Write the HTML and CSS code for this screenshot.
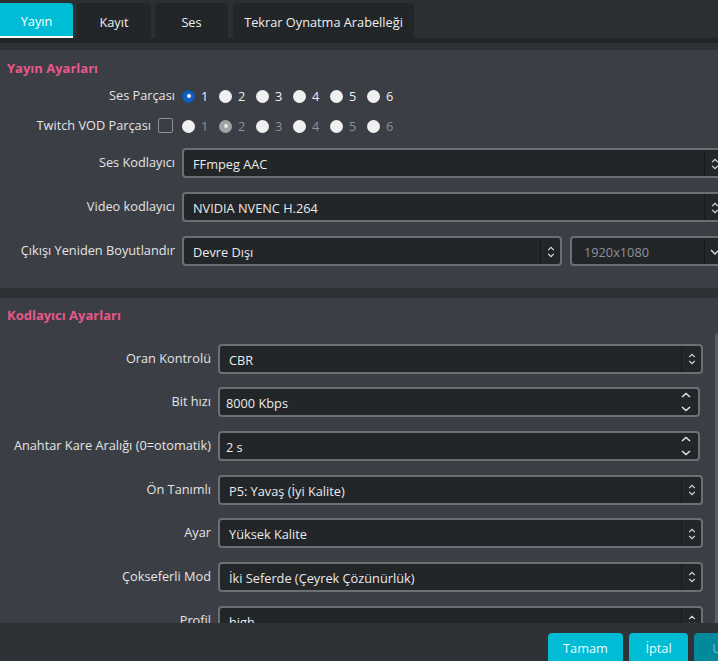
FILE: index.html
```html
<!DOCTYPE html>
<html lang="tr">
<head>
<meta charset="utf-8">
<title>Çıkış Ayarları</title>
<link rel="stylesheet" href="styles.css">
</head>
<body>
<div class="app">
  <div class="tabbar">
    <div class="tab active">Yayın</div>
    <div class="tab">Kayıt</div>
    <div class="tab">Ses</div>
    <div class="tab wide">Tekrar Oynatma Arabelleği</div>
  </div>
  <div class="tabedge"></div>
  <div class="scroll">
    <section class="group g1">
      <h2 class="gtitle">Yayın Ayarları</h2>
      <div class="row rradio first">
        <div class="label">Ses Parçası</div>
        <div class="radios">
          <span class="opt"><span class="radio on"></span>1</span>
          <span class="opt"><span class="radio"></span>2</span>
          <span class="opt"><span class="radio"></span>3</span>
          <span class="opt"><span class="radio"></span>4</span>
          <span class="opt"><span class="radio"></span>5</span>
          <span class="opt"><span class="radio"></span>6</span>
        </div>
      </div>
      <div class="row rradio second">
        <div class="label">Twitch VOD Parçası <span class="check"></span></div>
        <div class="radios disabled">
          <span class="opt"><span class="radio"></span>1</span>
          <span class="opt"><span class="radio dis-on"></span>2</span>
          <span class="opt"><span class="radio"></span>3</span>
          <span class="opt"><span class="radio"></span>4</span>
          <span class="opt"><span class="radio"></span>5</span>
          <span class="opt"><span class="radio"></span>6</span>
        </div>
      </div>
      <div class="row rfield f1">
        <div class="label">Ses Kodlayıcı</div>
        <div class="combo wfull">
          <span class="val">FFmpeg AAC</span>
          <span class="arrows"><svg width="8" height="12" viewBox="0 0 8 12"><path d="M1.2 4.2 L4 1.4 L6.8 4.2 M1.2 7.8 L4 10.6 L6.8 7.8" fill="none" stroke="#dcdcdc" stroke-width="1.2"/></svg></span>
        </div>
      </div>
      <div class="row rfield">
        <div class="label">Video kodlayıcı</div>
        <div class="combo wfull">
          <span class="val">NVIDIA NVENC H.264</span>
          <span class="arrows"><svg width="8" height="12" viewBox="0 0 8 12"><path d="M1.2 4.2 L4 1.4 L6.8 4.2 M1.2 7.8 L4 10.6 L6.8 7.8" fill="none" stroke="#dcdcdc" stroke-width="1.2"/></svg></span>
        </div>
      </div>
      <div class="row rfield">
        <div class="label">Çıkışı Yeniden Boyutlandır</div>
        <div class="pair">
          <div class="combo wres">
            <span class="val">Devre Dışı</span>
            <span class="arrows"><svg width="8" height="12" viewBox="0 0 8 12"><path d="M1.2 4.2 L4 1.4 L6.8 4.2 M1.2 7.8 L4 10.6 L6.8 7.8" fill="none" stroke="#dcdcdc" stroke-width="1.2"/></svg></span>
          </div>
          <div class="combo wsize">
            <span class="val muted">1920x1080</span>
            <span class="arrows"><svg width="10" height="8" viewBox="0 0 10 8"><path d="M1 2 L5 6 L9 2" fill="none" stroke="#dcdcdc" stroke-width="1.4"/></svg></span>
          </div>
        </div>
      </div>
    </section>

    <section class="group g2">
      <div class="form2">
        <h2 class="gtitle">Kodlayıcı Ayarları</h2>
        <div class="rows2">
          <div class="row rfield">
            <div class="label l2">Oran Kontrolü</div>
            <div class="combo w2">
              <span class="val">CBR</span>
              <span class="arrows"><svg width="8" height="12" viewBox="0 0 8 12"><path d="M1.2 4.2 L4 1.4 L6.8 4.2 M1.2 7.8 L4 10.6 L6.8 7.8" fill="none" stroke="#dcdcdc" stroke-width="1.2"/></svg></span>
            </div>
          </div>
          <div class="row rfield">
            <div class="label l2">Bit hızı</div>
            <div class="spin w2s">
              <span class="val">8000 Kbps</span>
              <span class="spinarrows"><svg width="10" height="20" viewBox="0 0 10 20"><path d="M1 5 L5 1.5 L9 5 M1 15 L5 18.5 L9 15" fill="none" stroke="#e6e6e6" stroke-width="1.5"/></svg></span>
            </div>
          </div>
          <div class="row rfield">
            <div class="label l2">Anahtar Kare Aralığı (0=otomatik)</div>
            <div class="spin w2s">
              <span class="val">2 s</span>
              <span class="spinarrows"><svg width="10" height="20" viewBox="0 0 10 20"><path d="M1 5 L5 1.5 L9 5 M1 15 L5 18.5 L9 15" fill="none" stroke="#e6e6e6" stroke-width="1.5"/></svg></span>
            </div>
          </div>
          <div class="row rfield">
            <div class="label l2">Ön Tanımlı</div>
            <div class="combo w2">
              <span class="val">P5: Yavaş (İyi Kalite)</span>
              <span class="arrows"><svg width="8" height="12" viewBox="0 0 8 12"><path d="M1.2 4.2 L4 1.4 L6.8 4.2 M1.2 7.8 L4 10.6 L6.8 7.8" fill="none" stroke="#dcdcdc" stroke-width="1.2"/></svg></span>
            </div>
          </div>
          <div class="row rfield">
            <div class="label l2">Ayar</div>
            <div class="combo w2">
              <span class="val">Yüksek Kalite</span>
              <span class="arrows"><svg width="8" height="12" viewBox="0 0 8 12"><path d="M1.2 4.2 L4 1.4 L6.8 4.2 M1.2 7.8 L4 10.6 L6.8 7.8" fill="none" stroke="#dcdcdc" stroke-width="1.2"/></svg></span>
            </div>
          </div>
          <div class="row rfield">
            <div class="label l2">Çokseferli Mod</div>
            <div class="combo w2">
              <span class="val">İki Seferde (Çeyrek Çözünürlük)</span>
              <span class="arrows"><svg width="8" height="12" viewBox="0 0 8 12"><path d="M1.2 4.2 L4 1.4 L6.8 4.2 M1.2 7.8 L4 10.6 L6.8 7.8" fill="none" stroke="#dcdcdc" stroke-width="1.2"/></svg></span>
            </div>
          </div>
          <div class="row rfield">
            <div class="label l2">Profil</div>
            <div class="combo w2">
              <span class="val">high</span>
              <span class="arrows"><svg width="8" height="12" viewBox="0 0 8 12"><path d="M1.2 4.2 L4 1.4 L6.8 4.2 M1.2 7.8 L4 10.6 L6.8 7.8" fill="none" stroke="#dcdcdc" stroke-width="1.2"/></svg></span>
            </div>
          </div>
        </div>
      </div>
      <div class="vscroll"></div>
    </section>
  </div>
  <div class="bottombar">
    <button class="btn b-ok">Tamam</button>
    <button class="btn b-cancel">İptal</button>
    <button class="btn b-apply">Uygula</button>
  </div>
</div>
</body>
</html>
```

FILE: styles.css
```css
html, body {
  margin: 0;
  padding: 0;
}
body {
  width: 718px;
  height: 661px;
  overflow: hidden;
  background: #2b2e32;
  font-family: "Open Sans", "DejaVu Sans", sans-serif;
  font-size: 12.75px;
  color: #e4e4e4;
}
.app {
  width: 718px;
  height: 661px;
  display: flex;
  flex-direction: column;
  overflow: hidden;
}
.tabbar {
  height: 38px;
  box-sizing: border-box;
  padding-top: 3px;
  display: flex;
  gap: 4px;
  background: #2b2e32;
  flex-shrink: 0;
}
.tab {
  width: 73px;
  height: 35px;
  box-sizing: border-box;
  background: #232629;
  border-radius: 4px 4px 0 0;
  display: flex;
  align-items: center;
  justify-content: center;
  padding-top: 2px;
  color: #eeeeee;
}
.tab:nth-child(2) { width: 74px; }
.tab.wide { width: 181px; margin-left: 1px; }
.tab.active {
  background: #00bcd4;
  border-bottom: 2px solid #ffffff;
  border-top-left-radius: 0;
  color: #ffffff;
}
.tabedge {
  height: 5px;
  background: #222427;
  flex-shrink: 0;
}
.scroll {
  flex: 1;
  overflow: hidden;
  background: #2e3135;
  padding-top: 7px;
  display: flex;
  flex-direction: column;
  gap: 10px;
}
.group {
  background: #3b3e45;
  flex-shrink: 0;
}
.g1 {
  height: 238px;
  box-sizing: border-box;
  padding-top: 9px;
  overflow: hidden;
}
.gtitle {
  margin: 0 0 0 7px;
  height: 18px;
  line-height: 18px;
  font-size: 13px;
  font-weight: 700;
  color: #e8578a;
}
.row {
  display: flex;
  align-items: center;
  gap: 7px;
}
.label {
  width: 175px;
  flex-shrink: 0;
  text-align: right;
  white-space: nowrap;
  display: flex;
  align-items: center;
  justify-content: flex-end;
  gap: 7px;
  padding-bottom: 2px;
}
.rradio { height: 22px; }
.rradio.first { margin-top: 8px; }
.rradio.second { margin-top: 8px; }
.rfield { height: 30px; margin-top: 14px; }
.f1 { margin-top: 11px; }
.radios {
  display: flex;
  gap: 11px;
  color: #f0f0f0;
}
.radios.disabled { color: #8d9197; }
.opt {
  display: flex;
  align-items: center;
  gap: 6px;
  width: 26px;
}
.radio {
  width: 13px;
  height: 13px;
  border-radius: 50%;
  background: #f0f0f0;
  box-sizing: border-box;
  flex-shrink: 0;
  position: relative;
}
.radio.on {
  background: #0f5fbf;
  border: 1px solid #0b56ae;
}
.radio.on::after,
.radio.dis-on::after {
  content: "";
  position: absolute;
  left: 50%;
  top: 50%;
  width: 4px;
  height: 4px;
  margin: -2px 0 0 -2px;
  border-radius: 50%;
  background: #ffffff;
}
.radio.dis-on { background: #a3a3a3; }
.radio.dis-on::after { background: #e4e4e4; }
.check {
  width: 15px;
  height: 15px;
  box-sizing: border-box;
  border: 1.5px solid #8f9093;
  border-radius: 2px;
  margin-top: 1px;
  margin-right: 2px;
}
.combo, .spin {
  height: 30px;
  box-sizing: border-box;
  border: 2px solid #6c6f73;
  border-radius: 4px;
  background: #232629;
  display: flex;
  align-items: center;
  flex-shrink: 0;
  color: #eaeaea;
}
.val {
  flex: 1;
  padding-left: 9px;
  padding-top: 2px;
  white-space: nowrap;
  overflow: hidden;
}
.spin .val { padding-left: 6px; }
.muted { color: #8c939b; }
.arrows {
  width: 20px;
  height: 100%;
  border-left: 1px solid #17191c;
  display: flex;
  align-items: center;
  justify-content: center;
  padding-top: 1px;
  box-sizing: border-box;
}
.spinarrows {
  width: 22px;
  height: 100%;
  display: flex;
  align-items: center;
  justify-content: center;
  padding-right: 2px;
  box-sizing: border-box;
}
.wfull { width: 544px; }
.pair { display: flex; gap: 8px; }
.wres { width: 380px; }
.wsize { width: 156px; }
.wsize .val { padding-left: 12px; }

.g2 {
  flex: 1;
  display: flex;
  overflow: hidden;
  padding-top: 8px;
  box-sizing: border-box;
}
.form2 {
  width: 715px;
  flex-shrink: 0;
}
.rows2 { padding-top: 6px; }
.rows2 .rfield { margin-top: 13.67px; }
.l2 { width: 211px; }
.w2 { width: 485px; }
.w2s { width: 482px; }
.vscroll {
  width: 8px;
  flex-shrink: 0;
  margin-top: 27px;
  background: #5a5d62;
  border-radius: 4px 4px 0 0;
}
.bottombar {
  height: 38px;
  flex-shrink: 0;
  box-sizing: border-box;
  padding-top: 10px;
  background: #2e3135;
  display: flex;
  justify-content: flex-end;
  gap: 6px;
}
.btn {
  height: 30px;
  border: none;
  border-radius: 4px;
  background: #00bcd4;
  color: #eafafc;
  font-family: "Open Sans", "DejaVu Sans", sans-serif;
  font-size: 12.75px;
  padding: 0;
  flex-shrink: 0;
}
.b-ok { width: 75px; }
.b-cancel { width: 59px; }
.b-apply {
  width: 77px;
  margin-right: -53px;
  background: #008a9c;
  color: #67c2cf;
}
```
